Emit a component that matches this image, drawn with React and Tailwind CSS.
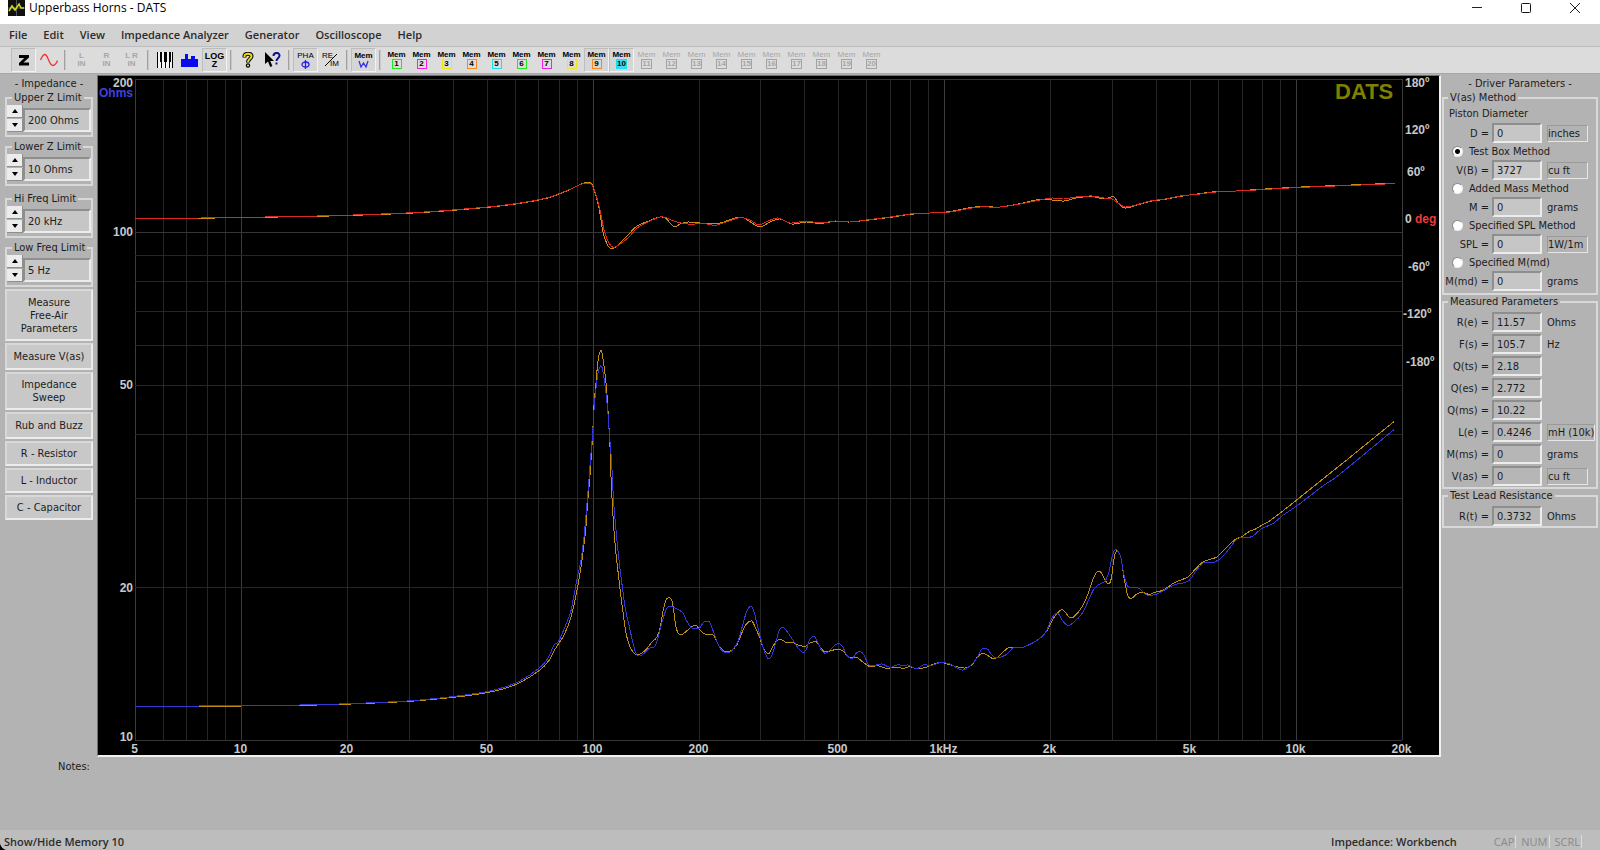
const MENUS = ['File', 'Edit', 'View', 'Impedance Analyzer', 'Generator', 'Oscilloscope', 'Help'];

const MEM_COLORS = ['#1ee81e', '#f41ee8', '#f0e61e', '#f58a1e', '#1edcf0', '#1ee81e', '#f41ee8', '#f0e61e', '#f58a1e', '#1edcf0'];
const MEMORIES = Array.from({ length: 20 }, (_, i) => ({
  n: i + 1,
  color: MEM_COLORS[i] || '#a3a3a3',
  disabled: i > 9,
  pressed: i === 8 || i === 9,
}));

const LIMITS = [
  { id: 'upper-z', label: 'Upper Z Limit', value: '200 Ohms' },
  { id: 'lower-z', label: 'Lower Z Limit', value: '10 Ohms' },
  { id: 'hi-freq', label: 'Hi Freq Limit', value: '20 kHz' },
  { id: 'low-freq', label: 'Low Freq Limit', value: '5 Hz' },
];

const ACTIONS = [
  { label: 'Measure Free-Air Parameters', size: 'h-[52px] px-3' },
  { label: 'Measure V(as)', size: 'h-[27px]' },
  { label: 'Impedance Sweep', size: 'h-[38px] px-3' },
  { label: 'Rub and Buzz', size: 'h-[27px]' },
  { label: 'R - Resistor', size: 'h-[25px]' },
  { label: 'L - Inductor', size: 'h-[25px]' },
  { label: 'C - Capacitor', size: 'h-[25px]' },
];

const METHODS = [
  { method: 'Test Box Method', label: 'V(B)', value: '3727', unit: 'cu ft', boxed: true, checked: true },
  { method: 'Added Mass Method', label: 'M', value: '0', unit: 'grams' },
  { method: 'Specified SPL Method', label: 'SPL', value: '0', unit: '1W/1m', boxed: true },
  { method: 'Specified M(md)', label: 'M(md)', value: '0', unit: 'grams' },
];

const MEASURED = [
  { label: 'R(e)', value: '11.57', unit: 'Ohms' },
  { label: 'F(s)', value: '105.7', unit: 'Hz' },
  { label: 'Q(ts)', value: '2.18' },
  { label: 'Q(es)', value: '2.772' },
  { label: 'Q(ms)', value: '10.22' },
  { label: 'L(e)', value: '0.4246', unit: 'mH (10k)', boxed: true },
  { label: 'M(ms)', value: '0', unit: 'grams' },
  { label: 'V(as)', value: '0', unit: 'cu ft', boxed: true },
];

/* ---------- plot geometry ---------- */
const LEFT = 135;
const RIGHT = 1402;
const TOP = 79;
const BOTTOM = 740;
const freqX = (f) => Math.round(LEFT + (Math.log10(f / 5) / Math.log10(4000)) * (RIGHT - LEFT)) + 0.5;
const ohmY = (z) => Math.round(BOTTOM - (Math.log10(z / 10) / Math.log10(20)) * (BOTTOM - TOP)) + 0.5;

const FREQS = [5, 6, 7, 8, 9];
for (const decade of [10, 100, 1000]) {
  for (let i = 1; i < 10; i++) FREQS.push(i * decade);
}
FREQS.push(10000, 20000);
const OHMS = [10, 20, 30, 40, 50, 60, 70, 80, 90, 100, 200];
const MAJOR = [5, 10, 100, 1000, 10000, 20000];

const FREQ_LABELS = [[5, '5'], [10, '10'], [20, '20'], [50, '50'], [100, '100'], [200, '200'], [500, '500'], [1000, '1kHz'], [2000, '2k'], [5000, '5k'], [10000, '10k'], [20000, '20k']];
const OHM_LABELS = [['200', 87], ['100', 236], ['50', 389], ['20', 592], ['10', 741]];
const DEG_LABELS = [['180º', 1405, 87], ['120º', 1405, 134], ['60º', 1407, 176], ['0', 1405, 223], ['-60º', 1408, 271], ['-120º', 1403, 318], ['-180º', 1406, 366]];

// mid and high band samples are stored at three units per pixel
const third = (ox, oy, pts) => pts.map(([x, y]) => [ox + x / 3, oy + y / 3]);

const Z_MEMORY = [
  [135, 706.6], [241, 706], [300, 705.4], [346, 704.2], [380, 702.8], [410, 701.3], [440, 698.7], [465, 696], [487, 692.6], [503, 689], [520, 682.5],
  ...third(540, 330, [
    [0, 1020], [28, 990], [45, 958], [72, 915], [92, 865], [104, 815], [113, 770], [122, 718], [130, 660], [137, 600], [142, 530], [150, 435], [155, 360], [158, 310], [162, 225], [168, 160], [173, 100], [178, 72], [184, 62], [188, 80], [193, 115], [200, 180], [205, 260], [210, 350], [213, 440], [218, 540], [225, 640], [237, 750], [248, 840], [258, 910], [270, 950], [288, 974], [315, 962], [335, 937], [350, 922], [360, 895], [370, 840], [378, 810], [388, 803], [396, 812], [402, 850], [408, 890], [415, 910], [428, 912], [445, 899], [466, 885], [485, 906], [500, 914], [520, 915], [530, 935], [542, 955], [555, 965], [573, 962], [590, 945], [603, 915], [616, 886], [635, 873], [645, 890], [660, 925], [668, 950], [678, 967], [688, 970], [698, 950], [710, 932], [725, 930], [740, 938], [760, 937], [770, 944], [795, 949], [808, 940], [828, 935], [840, 950], [852, 964], [870, 963], [890, 958], [908, 962], [925, 981], [950, 982], [968, 996], [990, 1010], [1012, 1007], [1040, 1015], [1070, 1011], [1090, 1015], [1110, 1010], [1130, 1017], [1160, 1011], [1180, 1003],
  ]),
  ...third(930, 400, [
    [30, 787], [55, 793], [80, 800], [105, 804], [125, 795], [145, 768], [160, 760], [172, 766], [190, 776], [205, 770], [235, 744], [275, 743], [300, 733], [330, 715], [352, 690], [375, 648], [395, 629], [405, 635], [418, 652], [432, 650], [455, 622], [475, 580], [488, 540], [498, 520], [506, 514], [515, 520], [527, 543], [537, 551], [544, 535], [550, 490], [556, 460], [562, 453], [572, 470], [580, 520], [588, 565], [595, 590], [605, 595], [620, 582], [637, 576], [657, 583], [675, 577], [700, 570], [735, 547], [775, 530], [800, 503], [820, 485], [860, 471], [885, 447], [915, 419], [935, 410], [960, 393], [975, 388], [1000, 373], [1020, 362], [1100, 300], [1250, 180], [1393, 64],
  ]),
];

const Z_LIVE = [
  [135, 706.4], [241, 705.7], [300, 705], [346, 703.8], [380, 702.4], [410, 700.8], [440, 698], [465, 695], [487, 691.6], [503, 687.6], [520, 681],
  ...third(540, 330, [
    [0, 1012], [25, 983], [42, 945], [55, 935], [75, 890], [92, 845], [102, 795], [112, 742], [124, 685], [132, 620], [139, 545], [146, 460], [152, 380], [158, 310], [162, 240], [167, 185], [173, 135], [178, 115], [184, 108], [190, 130], [197, 180], [203, 240], [208, 310], [215, 400], [220, 500], [228, 600], [237, 690], [247, 770], [256, 835], [268, 890], [278, 935], [287, 968], [298, 978], [310, 972], [328, 955], [345, 948], [355, 920], [365, 880], [378, 840], [388, 829], [405, 834], [428, 848], [440, 873], [455, 894], [478, 894], [490, 878], [500, 873], [510, 878], [522, 910], [535, 945], [550, 965], [570, 966], [588, 945], [600, 915], [612, 870], [622, 840], [634, 829], [642, 845], [652, 885], [662, 925], [670, 955], [680, 980], [688, 986], [698, 970], [708, 935], [718, 900], [728, 892], [740, 903], [760, 932], [775, 955], [790, 968], [800, 955], [808, 930], [823, 920], [835, 940], [845, 962], [857, 970], [872, 958], [885, 945], [897, 941], [908, 950], [920, 975], [937, 986], [948, 970], [960, 964], [972, 975], [985, 1003], [1000, 1007], [1025, 1002], [1050, 1012], [1075, 1004], [1090, 1008], [1103, 1005], [1130, 1017], [1148, 1005], [1175, 1006],
  ]),
  ...third(930, 400, [
    [30, 788], [60, 792], [85, 806], [100, 810], [120, 798], [140, 775], [155, 748], [172, 747], [185, 765], [200, 774], [230, 763], [250, 743], [275, 743], [300, 733], [330, 715], [350, 692], [365, 655], [383, 640], [400, 665], [415, 677], [430, 668], [455, 642], [475, 602], [490, 570], [505, 555], [525, 543], [537, 515], [545, 475], [553, 452], [560, 449], [572, 470], [580, 515], [590, 553], [600, 563], [625, 564], [648, 584], [675, 584], [700, 572], [735, 554], [775, 543], [800, 510], [820, 489], [850, 488], [880, 468], [920, 417], [935, 413], [965, 410], [995, 386], [1030, 370], [1060, 345], [1100, 318], [1180, 257], [1220, 230], [1393, 88],
  ]),
];

const PHASE_LIVE = [
  [135, 218.4], [201, 218], [241, 217.4], [326, 215.8], [406, 213], [452, 210], [494, 206.3], [528, 201.7], [549, 197.3], [559, 193.7], [570, 189.3], [580, 184.7], [587, 183.3], [592, 185], [596, 195], [600, 210], [604, 230], [608, 241], [613, 247.3], [620, 244], [629, 237], [637, 228], [648, 222], [660, 217], [666, 217.7], [673, 220.7], [681, 223], [692, 224.3], [702, 223], [715, 225.3], [726, 222], [740, 217.7], [750, 220],
  [759, 225], [768, 221], [778, 218], [790, 223], [806, 221], [820, 223], [835, 221], [850, 222], [866, 220], [890, 217], [910, 214], [930, 213], [950, 212], [966, 209], [980, 207], [1000, 207], [1020, 204], [1040, 200], [1052, 198], [1064, 199], [1076, 197], [1092, 196], [1104, 198], [1112, 199], [1118, 203], [1125, 207], [1136, 205], [1150, 201], [1165, 199], [1180, 196], [1200, 194], [1216, 192], [1236, 191], [1256, 190], [1296, 187.6], [1346, 185.6], [1395, 183.6],
];

const PHASE_MEMORY = [
  [135, 218.5], [201, 218.2], [241, 217.6], [326, 216.1], [406, 213.4], [452, 210.4], [494, 206.7], [528, 202.1], [549, 197.7], [559, 194], [570, 189.6], [580, 184.4], [587, 182.4], [592, 184], [595, 193], [599, 208], [603, 232], [607, 244], [611, 248.5], [617, 246], [627, 236], [637, 226], [648, 221.4], [660, 217], [666, 218.5], [671, 224], [675, 227], [680, 224], [688, 222], [700, 223], [720, 223], [735, 218], [744, 218],
  [752, 223], [760, 227], [770, 222], [780, 219], [792, 224], [806, 222], [820, 223.4], [835, 221.4], [850, 222], [866, 220.3], [890, 217.4], [910, 214.4], [930, 213], [950, 211.6], [966, 208.4], [980, 206.6], [1000, 207], [1020, 203.6], [1040, 199.4], [1052, 200], [1064, 201], [1076, 198], [1092, 196.4], [1104, 199], [1114, 197], [1119, 204], [1125, 208], [1136, 205.4], [1150, 201.4], [1165, 199.4], [1180, 196.4], [1200, 193.6], [1216, 191.6], [1236, 191], [1256, 189.6], [1296, 187.2], [1346, 185.2], [1395, 183.2],
];

// smooth path through every sample; tangents are scaled to each span
function toPath(pts) {
  const slope = (i) => {
    const a = pts[Math.max(i - 1, 0)];
    const b = pts[Math.min(i + 1, pts.length - 1)];
    return (b[1] - a[1]) / (b[0] - a[0]);
  };
  let d = `M${pts[0][0]} ${pts[0][1]}`;
  for (let i = 0; i < pts.length - 1; i++) {
    const [x0, y0] = pts[i];
    const [x1, y1] = pts[i + 1];
    const h = (x1 - x0) / 3;
    d += `C${(x0 + h).toFixed(1)} ${(y0 + h * slope(i)).toFixed(1)} ${(x1 - h).toFixed(1)} ${(y1 - h * slope(i + 1)).toFixed(1)} ${x1.toFixed(1)} ${y1.toFixed(1)}`;
  }
  return d;
}

function Plot() {
  return (
    <svg viewBox="98 76 1341 679" className="block w-full h-auto bg-black font-['Liberation_Sans',sans-serif] font-bold text-[12px]">
      <g strokeWidth="1" shapeRendering="crispEdges">
        {FREQS.map((f) => (
          <line key={f} x1={freqX(f)} x2={freqX(f)} y1={TOP} y2={BOTTOM} stroke={MAJOR.includes(f) ? '#3c3c3c' : '#262626'} />
        ))}
        {OHMS.map((z) => (
          <line key={z} x1={LEFT} x2={RIGHT} y1={ohmY(z)} y2={ohmY(z)} stroke={[10, 100, 200].includes(z) ? '#363636' : '#262626'} />
        ))}
      </g>
      <g fill="none" strokeWidth="1" strokeLinejoin="round" shapeRendering="crispEdges">
        <path d={toPath(Z_MEMORY)} stroke="#c08c10" />
        <path d={toPath(Z_LIVE)} stroke="#3636d6" />
        <path d={toPath(PHASE_MEMORY)} stroke="#d08c10" />
        <path d={toPath(PHASE_LIVE)} stroke="#d82a20" />
      </g>
      <g fill="#c8c8c8">
        {OHM_LABELS.map(([t, y]) => <text key={t} x="133" y={y} textAnchor="end">{t}</text>)}
        {DEG_LABELS.map(([t, x, y]) => <text key={t} x={x} y={y}>{t}</text>)}
        {FREQ_LABELS.map(([f, t]) => <text key={t} x={freqX(f) - 1} y="753" textAnchor="middle">{t}</text>)}
      </g>
      <text x="133" y="97" textAnchor="end" fill="#4040e0">Ohms</text>
      <text x="1415" y="223" fill="#f03838">deg</text>
      <text x="1335" y="99" fontSize="22" fill="#808000">DATS</text>
    </svg>
  );
}

function ToolButton({ label, pressed, disabled, children }) {
  const state = pressed
    ? 'border border-t-[#bdbdbd] border-l-[#bdbdbd] border-r-[#f2f2f2] border-b-[#f2f2f2] bg-[#d6d6d6]'
    : 'border border-transparent';
  return (
    <button type="button" aria-label={label} disabled={disabled} className={`relative w-[25px] h-[24px] shrink-0 flex flex-col items-center justify-center text-[8px] leading-[8px] font-bold ${state} ${disabled ? 'text-[#a6a6a6]' : 'text-black'}`}>
      {children}
    </button>
  );
}

function Separator() {
  return (
    <div className="w-[8px] shrink-0 flex justify-center">
      <div className="w-[2px] h-[20px] bg-[#a0a0a0] border-r border-[#c8c8c8]" />
    </div>
  );
}

function Toolbar() {
  return (
    <div className="flex items-center h-[27px] pl-[11px] border-t border-[#bebebe] bg-[#dcdcdc] font-['Liberation_Sans',sans-serif]">
      <ToolButton label="Impedance" pressed>
        <svg width="12" height="12" viewBox="0 0 12 12"><path d="M1 1h10v2.500L5.500 8.500h5.500v3H1V9l5.300-5H1z" fill="#000" /></svg>
      </ToolButton>
      <ToolButton label="Sine">
        <svg width="18" height="14" viewBox="0 0 18 14"><path d="M.5 7C2 3.500 3.500 1.500 5 1.500c3 0 4 11 8 11 1.800 0 3.300-2 4.500-5" fill="none" stroke="#f03030" strokeWidth="1.300" /></svg>
      </ToolButton>
      <Separator />
      <ToolButton label="Left input" disabled><span>L</span><span>IN</span></ToolButton>
      <ToolButton label="Right input" disabled><span>R</span><span>IN</span></ToolButton>
      <ToolButton label="Both inputs" disabled><span>L R</span><span>IN</span></ToolButton>
      <Separator />
      <ToolButton label="Keyboard">
        <svg width="18" height="16" viewBox="0 0 18 16" shapeRendering="crispEdges">
          <path d="M1 0h16v16H1z" fill="#f4f4f4" />
          <path d="M1 0h1v16H1zM5 10h1v6H5zM9 10h1v6H9zM13 10h1v6h-1zM16 0h1v16h-1zM4 0h2v10H4zM8 0h3v10H8zM13 0h2v10h-2z" fill="#000" />
        </svg>
      </ToolButton>
      <ToolButton label="Spectrum">
        <svg width="17" height="13" viewBox="0 0 17 13" shapeRendering="crispEdges"><path d="M0 5h4V0h3v5h3V2h4v3h3v8H0z" fill="#0a0af0" /></svg>
      </ToolButton>
      <ToolButton label="Log impedance" pressed><span className="text-[9px]">LOG</span><span className="text-[9px]">Z</span></ToolButton>
      <Separator />
      <ToolButton label="Help">
        <svg width="12" height="16" viewBox="0 0 12 16">
          <path d="M2.500 5.500V4c0-3 7-3 7 .3C9.500 7 6 6.500 6 10.500" fill="none" stroke="#000" strokeWidth="4" />
          <path d="M2.500 5V4c0-3 7-3 7 .3C9.500 7 6 6.500 6 10" fill="none" stroke="#e8e010" strokeWidth="2" />
          <circle cx="6" cy="13.500" r="2.200" fill="#000" /><circle cx="6" cy="13.500" r="1.100" fill="#e8e010" />
        </svg>
      </ToolButton>
      <ToolButton label="Context help">
        <svg width="17" height="16" viewBox="0 0 17 16">
          <path d="M1 0v12l3-2.600L6.200 15l2.200-1L6.200 9H10z" fill="#000" />
          <path d="M9.500 4c0-4 6-4 6-.5 0 3-3 2.500-3 5.500" fill="none" stroke="#101090" strokeWidth="2" />
          <path d="M11.500 10.500h2v2h-2z" fill="#101090" />
        </svg>
      </ToolButton>
      <Separator />
      <ToolButton label="Phase" pressed>
        <span className="font-normal">PHA</span>
        <svg width="9" height="9" viewBox="0 0 9 9"><ellipse cx="4.500" cy="4.500" rx="3.500" ry="2.500" fill="none" stroke="#2020f0" strokeWidth="1.300" /><path d="M4.500 0v9" stroke="#2020f0" strokeWidth="1.300" /></svg>
      </ToolButton>
      <ToolButton label="Real and imaginary">
        <span className="font-normal pr-[6px]">RE</span>
        <span className="font-normal pl-[8px]">IM</span>
        <svg className="absolute" width="14" height="14" viewBox="0 0 14 14"><path d="M1 13L13 1" stroke="#000" strokeWidth="1" /></svg>
      </ToolButton>
      <Separator />
      <ToolButton label="Working memory" pressed>
        <span>Mem</span>
        <svg width="11" height="8" viewBox="0 0 11 8"><path d="M1 1l2 6 2.500-4L8 7l2-6" fill="none" stroke="#3030f0" strokeWidth="1.300" /></svg>
      </ToolButton>
      <Separator />
      {MEMORIES.map((m) => (
        <ToolButton key={m.n} label={`Memory ${m.n}`} pressed={m.pressed} disabled={m.disabled}>
          <span className={m.disabled ? 'font-normal' : ''}>Mem</span>
          <span className={`border-[1px] min-w-[10px] h-[10px] leading-[8px] ${m.n === 10 ? 'bg-[#3cdcf0]' : ''}`} style={{ borderColor: m.color }}>{m.n}</span>
        </ToolButton>
      ))}
    </div>
  );
}

const SUNKEN = 'border-2 border-t-[#8e8e8e] border-l-[#8e8e8e] border-r-[#ececec] border-b-[#ececec]';
const GROUP = 'min-w-0 border-2 border-[#d8d8d8]';

function Limit({ id, label, value }) {
  return (
    <fieldset className={`${GROUP} h-[46px]`}>
      <legend className="ml-[5px] px-[2px] leading-[14px]"><label htmlFor={id}>{label}</label></legend>
      <div className="flex items-end">
        <div className="w-[16px] shrink-0 flex flex-col gap-px">
          {['up', 'down'].map((dir) => (
            <button key={dir} type="button" aria-label={`${label} ${dir}`} className="h-[13px] flex items-center justify-center bg-[#ececec] border-r border-b border-[#8e8e8e]">
              <svg width="6" height="4" viewBox="0 0 6 4"><path d={dir === 'up' ? 'M0 4L3 0L6 4z' : 'M0 0H6L3 4z'} fill="#000" /></svg>
            </button>
          ))}
        </div>
        <input id={id} readOnly value={value} className={`min-w-0 flex-1 h-[24px] pl-[3px] bg-[#c6c6c6] ${SUNKEN}`} />
      </div>
    </fieldset>
  );
}

function Param({ label, value, unit, boxed, editable }) {
  const id = `param-${label}`;
  return (
    <div className="flex items-center h-[20px]">
      <label htmlFor={id} className="w-[45px] mr-[3px] shrink-0 text-right whitespace-nowrap">{label} =</label>
      <input id={id} readOnly={!editable} defaultValue={value} className={`w-[50px] h-[20px] pl-[3px] shrink-0 ${SUNKEN} ${editable ? 'bg-[#c6c6c6]' : 'bg-[#b6b6b6]'}`} />
      {boxed ? (
        <button type="button" className="ml-[5px] min-w-[41px] h-[17px] text-left whitespace-nowrap border border-t-[#9a9a9a] border-l-[#9a9a9a] border-r-[#e6e6e6] border-b-[#e6e6e6]">{unit}</button>
      ) : (
        <span className="ml-[5px]">{unit}</span>
      )}
    </div>
  );
}

export default function App() {
  return (
    <div className="min-h-screen bg-black">
      <div className="min-h-screen flex flex-col rounded-bl-lg overflow-hidden bg-[#b3b3b3] text-[#1c1c1c] text-[11px] leading-[13px] font-['DejaVu_Sans_Condensed','Noto_Sans',sans-serif]">
        {/* Title bar */}
        <header className="flex items-start h-[24px] pl-[8px] bg-white font-['Open_Sans',sans-serif]">
          <svg width="17" height="16" viewBox="0 0 17 16">
            <path d="M0 0h17v16H0z" fill="#101010" />
            <path d="M8.500 0v16M0 8h17" stroke="#555" strokeWidth="1" />
            <path d="M1 11l3-5 3 4 4-6 2 4h3" fill="none" stroke="#c8d820" strokeWidth="1.600" />
          </svg>
          <h1 className="ml-[4px] text-[12px] leading-[16px] text-black">Upperbass Horns - DATS</h1>
          <div className="ml-auto flex pr-[19px] gap-[37px] pt-[2px]">
            <button type="button" aria-label="Minimize"><svg width="12" height="12" viewBox="0 0 12 12"><path d="M1 5.500h10" stroke="#222" /></svg></button>
            <button type="button" aria-label="Maximize"><svg width="12" height="12" viewBox="0 0 12 12"><rect x="1.500" y="1.500" width="9" height="9" rx="1" fill="none" stroke="#111" /></svg></button>
            <button type="button" aria-label="Close"><svg width="12" height="12" viewBox="0 0 12 12"><path d="M1 1l10 10M11 1L1 11" stroke="#222" /></svg></button>
          </div>
        </header>

        <nav className="flex items-center h-[22px] pl-[9px] pb-[2px] gap-[16px] bg-[#d2d2d2] text-[#2c2c2c] font-['Open_Sans',sans-serif] text-[11px] font-semibold">
          {MENUS.map((m) => <button key={m} type="button">{m}</button>)}
        </nav>

        <Toolbar />

        <main className="flex items-start pt-px border-t border-[#a8a8a8]">
          {/* Limits and actions */}
          <aside className="w-[97px] shrink-0 pt-[2px] pl-[5px] pr-[4px]">
            <h2 className="text-center leading-[14px]">- Impedance -</h2>
            <div className="flex flex-col gap-[3px]">
              {LIMITS.slice(0, 2).map((l) => <Limit key={l.id} {...l} />)}
            </div>
            <div className="flex flex-col gap-[3px] mt-[6px]">
              {LIMITS.slice(2).map((l) => <Limit key={l.id} {...l} />)}
            </div>
            <div className="flex flex-col gap-[2px] mt-[2px]">
              {ACTIONS.map((a) => (
                <button key={a.label} type="button" className={`${a.size} border-2 border-t-[#d8d8d8] border-l-[#d8d8d8] border-r-[#ececec] border-b-[#ececec] bg-[#c8c8c8]`}>{a.label}</button>
              ))}
            </div>
          </aside>

          <section className="flex-1 min-w-0 border-t border-l border-[#6e6e6e] border-r-2 border-b-2 border-r-[#f0f0f0] border-b-[#f0f0f0]">
            <Plot />
          </section>

          {/* Driver parameters */}
          <aside className="w-[159px] shrink-0 pt-[2px] pl-px pr-[2px]">
            <h2 className="text-center leading-[14px]">- Driver Parameters -</h2>
            <fieldset className={`${GROUP} pb-[2px]`}>
              <legend className="ml-[4px] px-[2px] leading-[14px]">V(as) Method</legend>
              <p className="pl-[5px] leading-[18px]">Piston Diameter</p>
              <Param label="D" value="0" unit="inches" boxed editable />
              {METHODS.map((m) => (
                <div key={m.method}>
                  <label className="flex items-center h-[17px] pl-[8px] gap-[6px] whitespace-nowrap">
                    <input type="radio" name="vas-method" defaultChecked={m.checked} className="appearance-none w-[11px] h-[11px] shrink-0 rounded-full bg-white border border-t-[#888888] border-l-[#888888] border-r-[#eeeeee] border-b-[#eeeeee] checked:bg-[radial-gradient(circle,#000_2px,#fff_3px)]" />
                    {m.method}
                  </label>
                  <Param label={m.label} value={m.value} unit={m.unit} boxed={m.boxed} editable />
                </div>
              ))}
            </fieldset>
            <fieldset className={`${GROUP} pt-[3px] pb-px flex flex-col gap-[2px]`}>
              <legend className="ml-[4px] px-[2px] leading-[14px]">Measured Parameters</legend>
              {MEASURED.map((p) => <Param key={p.label} {...p} />)}
            </fieldset>
            <fieldset className={`${GROUP} pt-[3px]`}>
              <legend className="ml-[4px] px-[2px] leading-[14px]">Test Lead Resistance</legend>
              <Param label="R(t)" value="0.3732" unit="Ohms" />
            </fieldset>
          </aside>
        </main>

        <div className="flex-1 pl-[58px] pt-[3px]">Notes:</div>

        {/* Status bar */}
        <footer className="flex items-center h-[20px] pl-[4px] pr-[18px] pt-[2px] bg-[#bdbdbd] text-[#2c2c2c] font-['Open_Sans',sans-serif] text-[11px] font-semibold">
          <span>Show/Hide Memory 10</span>
          <span className="ml-auto mr-[32px]">Impedance: Workbench</span>
          {['CAP', 'NUM', 'SCRL'].map((k) => (
            <span key={k} className="pr-px pl-[5px] border-r border-[#dcdcdc] font-normal text-[#8a8a8a]">{k}</span>
          ))}
        </footer>
      </div>
    </div>
  );
}
